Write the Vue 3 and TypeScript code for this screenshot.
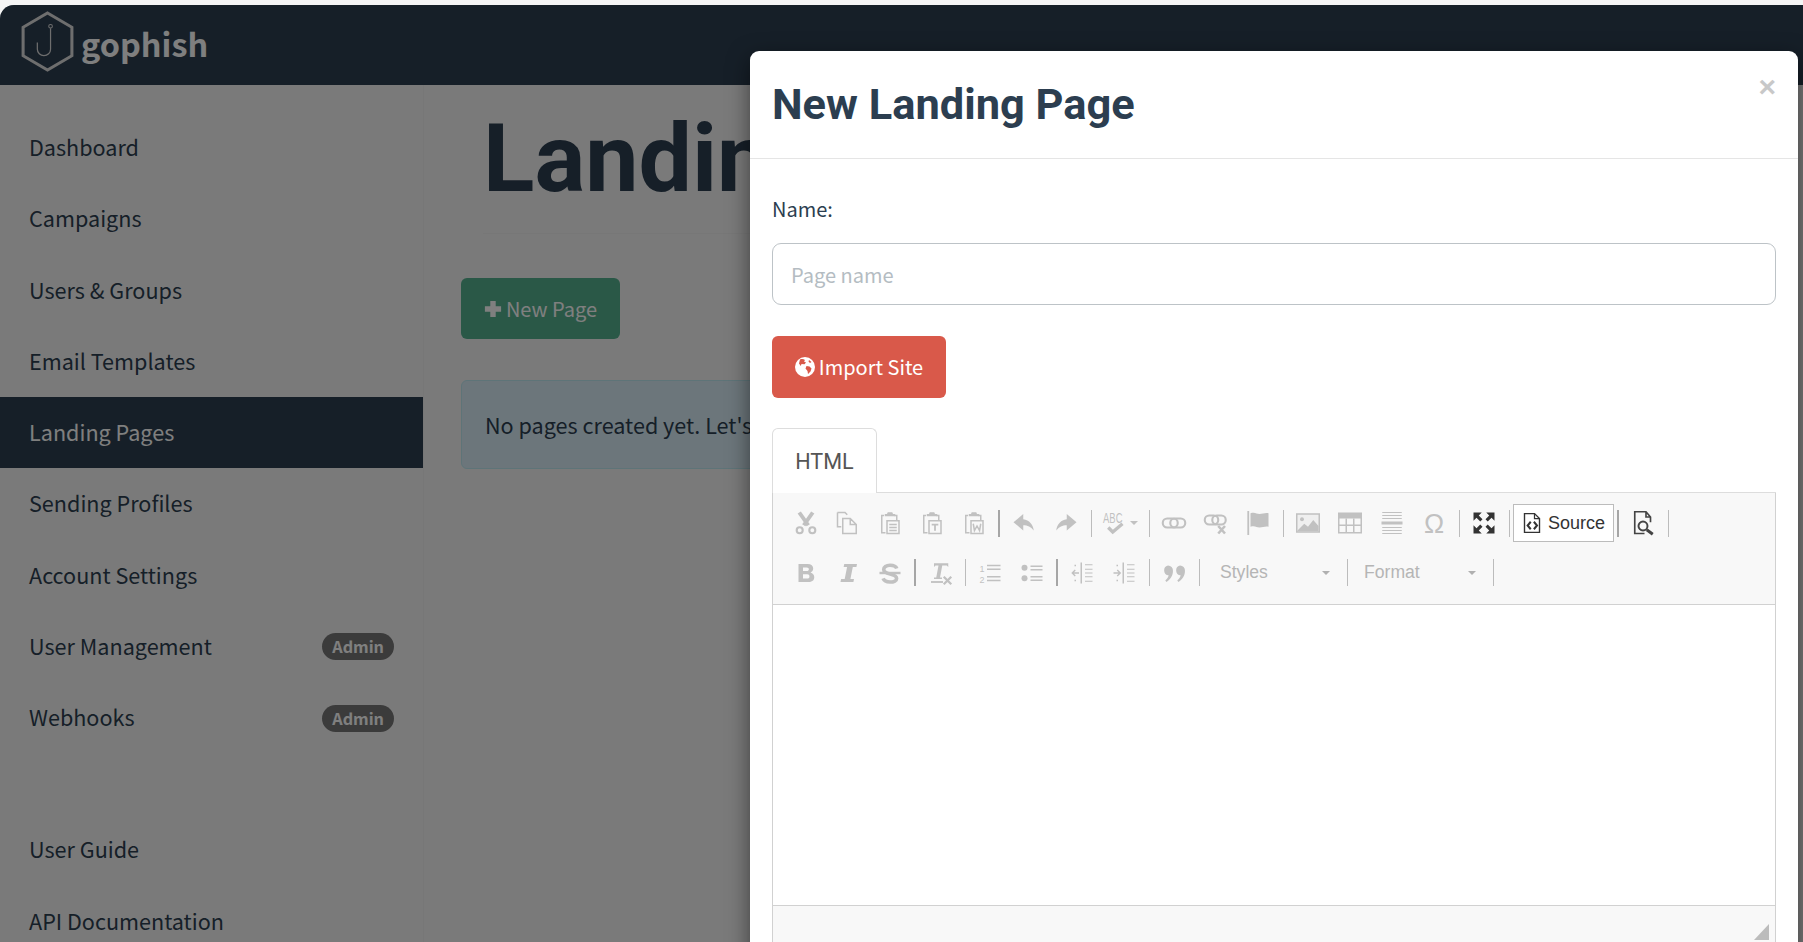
<template>
  <div class="page">
    <div class="navbar">
      <svg class="logo" viewBox="0 0 54 60" fill="none" stroke="#ddd">
        <path d="M27 2 L51 16 V44 L27 58 L3 44 V16 Z" stroke-width="3" />
        <path d="M30 17 V37.5 a6.5 6.5 0 0 1 -13 0 V31" stroke-width="1.2" />
        <circle cx="30" cy="15" r="1.8" stroke-width="1" />
      </svg>
      <span class="brand">gophish</span>
    </div>
    <div class="body">
      <aside class="sidebar">
        <div
          v-for="item in navItems"
          :key="item.label"
          class="nav-item"
          :class="{ active: item.active }"
        >
          <span>{{ item.label }}</span>
          <span v-if="item.admin" class="badge">Admin</span>
        </div>
        <div class="nav-gap"></div>
        <div v-for="item in helpItems" :key="item" class="nav-item">{{ item }}</div>
      </aside>
      <main class="main">
        <h1 class="page-title">Landing Pages</h1>
        <button class="new-btn">
          <svg class="plus" viewBox="0 0 20 20"><path d="M7 1h6v6h6v6h-6v6H7v-6H1V7h6z" fill="#fff" /></svg>New Page
        </button>
        <div class="alert">No pages created yet. Let's create one!</div>
      </main>
    </div>

    <div class="backdrop"></div>
    <div class="modal">
      <div class="modal-header">
        <h4>New Landing Page</h4>
        <span class="close">×</span>
      </div>
      <div class="modal-body">
        <label class="name-label">Name:</label>
        <input class="name-input" type="text" placeholder="Page name" />
        <button class="import-btn">
          <svg class="globe" viewBox="0 0 20 20">
            <circle cx="10" cy="10" r="10" fill="#fff" />
            <path d="M5 2.5c2-.8 3.5-.5 5 .5l-1 1.5 2 1-1.5 1.8-3-.3-.7 2-1.8-2.5z M11.5 9l3 .5 2 2-1 3-2.5 2.5-.5-3-2-2.5z M14 3l2.5 2-1.5 1-1.5-1.500z" fill="#d9594a" />
          </svg><span class="import-text">Import Site</span>
        </button>
        <div class="tabs"><div class="tab">HTML</div></div>
        <div class="editor">
          <div class="toolbar">
            <div class="tool-row">
              <template v-for="(t, i) in row1" :key="i">
                <span v-if="t === '|'" class="sep"></span>
                <span v-else-if="t === '||'" class="sep thick"></span>
                <span v-else class="tool" :class="{ on: t === 'max', wide: t === 'spell' }">
                  <svg viewBox="0 0 16 16" v-html="icons[t]"></svg>
                  <i v-if="t === 'spell'" class="caret"></i>
                </span>
              </template>
              <span class="source"><svg viewBox="0 0 16 16" v-html="icons.source"></svg>Source</span>
              <span class="sep thick"></span>
              <span class="tool on"><svg viewBox="0 0 16 16" v-html="icons.preview"></svg></span>
              <span class="sep"></span>
            </div>
            <div class="tool-row second">
              <template v-for="(t, i) in row2" :key="i">
                <span v-if="t === '|'" class="sep"></span>
                <span v-else-if="t === '||'" class="sep thick"></span>
                <span v-else class="tool"><svg viewBox="0 0 16 16" v-html="icons[t]"></svg></span>
              </template>
              <span class="combo">Styles<i class="caret"></i></span>
              <span class="sep"></span>
              <span class="combo format">Format<i class="caret"></i></span>
              <span class="sep"></span>
            </div>
          </div>
          <div class="content"></div>
          <div class="editor-foot"><i class="resizer"></i></div>
        </div>
      </div>
    </div>
  </div>
</template>

<script setup lang="ts">
const navItems = [
  { label: 'Dashboard' },
  { label: 'Campaigns' },
  { label: 'Users & Groups' },
  { label: 'Email Templates' },
  { label: 'Landing Pages', active: true },
  { label: 'Sending Profiles' },
  { label: 'Account Settings' },
  { label: 'User Management', admin: true },
  { label: 'Webhooks', admin: true },
];
const helpItems = ['User Guide', 'API Documentation'];

const row1 = [
  'cut', 'copy', 'paste', 'pastetext', 'pasteword', '||',
  'undo', 'redo', '|', 'spell', '|',
  'link', 'unlink', 'flag', '|',
  'image', 'table', 'hr', 'omega', '|', 'max', '|',
];
const row2 = [
  'bold', 'italic', 'strike', '||', 'clear', '|',
  'ol', 'ul', '||', 'outdent', 'indent', '|', 'quote', '|',
];

// ckeditor moono icons, redrawn on a 16 unit box
const clip = '<path d="M4 3H2.5v11.5H5M11 3h1.5v3" fill="none" stroke="#444"/><path d="M4.5 3.5V2H6l.5-1.2h3L10 2h1.5v1.500z" fill="#444"/>';
const icons: Record<string, string> = {
  cut: '<path d="M3.5 1l6 8.5M12.5 1l-6 8.5" stroke="#444" stroke-width="2.6" fill="none"/><circle cx="3.800" cy="12.800" r="2" fill="none" stroke="#444" stroke-width="1.4"/><circle cx="12.200" cy="12.800" r="2" fill="none" stroke="#444" stroke-width="1.4"/>',
  copy: '<path d="M1 1h5l1.500 1.500M1 1v9.500H3.500M4.500 5h5l4 4v6h-9zM9.500 5v4h4" fill="none" stroke="#444"/>',
  paste: clip + '<path d="M6 6.5h8V15H6zM7.5 9h5M7.5 11h5M7.5 13h5" fill="none" stroke="#444"/>',
  pastetext: clip + '<path d="M6 6.5h8V15H6z" fill="none" stroke="#444"/><path d="M7.800 8.500h4.400v1.100h-1.600v3.600H9.400V9.600H7.800z" fill="#444"/>',
  pasteword: clip + '<path d="M6 6.5h8V15H6zM7.5 8.5l.8 4.500L10 10l1.700 3 .8-4.500" fill="none" stroke="#444"/>',
  undo: '<path d="M7.500 2L1 7.500l6.500 5.500V9.500c3 0 5 1 7 3.500-.5-4-3-7-7-7.500z" fill="#444"/>',
  redo: '<path d="M8.500 2L15 7.500 8.500 13V9.500c-3 0-5 1-7 3.500.5-4 3-7 7-7.500z" fill="#444"/>',
  spell: '<text x="0" y="8" font-family="Liberation Sans" font-size="9.5" textLength="13" lengthAdjust="spacingAndGlyphs" fill="#444">ABC</text><path d="M3.500 11l3 3L13 8.500" fill="none" stroke="#444" stroke-width="2.200"/>',
  link: '<rect x="0.500" y="5" width="10" height="6" rx="3" fill="none" stroke="#444" stroke-width="1.400"/><rect x="5.500" y="5" width="10" height="6" rx="3" fill="none" stroke="#444" stroke-width="1.400"/>',
  unlink: '<rect x="0.500" y="3" width="9" height="6" rx="3" fill="none" stroke="#444" stroke-width="1.400"/><rect x="5.500" y="3" width="9" height="6" rx="3" fill="none" stroke="#444" stroke-width="1.400"/><path d="M9.500 10l4.500 5M14 10l-4.500 5" stroke="#444" stroke-width="1.700"/>',
  flag: '<path d="M1.500 0v16" stroke="#444" stroke-width="1.200"/><path d="M3 1.500c3-1 4 .5 6 .5s4-1 6-.5v9c-2-.5-4 .5-6 .5s-3-1.500-6-.5z" fill="#444"/>',
  image: '<rect x="0.500" y="2" width="15" height="12" fill="#ddd" stroke="#444"/><circle cx="4" cy="5.500" r="1.300" fill="#444"/><path d="M1 13l4.500-4.500 2.500 2 3.500-4.500L15 10v3.500H1z" fill="#444"/>',
  table: '<path d="M.5 1.500h15v13H.5z" fill="none" stroke="#444"/><path d="M.5 1.500h15V5H.5z" fill="#444"/><path d="M5.500 5v9.500M10.500 5v9.500M.5 9.500h15" stroke="#444"/>',
  hr: '<path d="M1.500 1h13M1.500 3h13M1.500 5h13M1.500 11h13M1.500 13h13M1.500 15h13" stroke="#444" stroke-width=".7"/><path d="M1 7h14v2H1z" fill="#444"/>',
  omega: '<text x="8" y="14.500" text-anchor="middle" font-family="Liberation Sans" font-size="18" fill="#444">Ω</text>',
  max: '<path d="M1 1h5.500L4.500 3 7 5.500 5.500 7 3 4.500 1 6.500zM15 1v5.500L13 4.500 10.500 7 9 5.500 11.500 3 9.500 1zM1 15V9.500L3 11.500 5.500 9 7 10.500 4.500 13 6.500 15zM15 15H9.500l2-2L9 10.500 10.500 9 13 11.500l2-2z" fill="#333"/>',
  source: '<path d="M2 .5h8l4 4v11H2z" fill="none" stroke="#333" stroke-width="1.100"/><path d="M10 .5v4h4" fill="none" stroke="#333"/><path d="M7 7L4.500 10 7 13M9.500 7L12 10 9.500 13" fill="none" stroke="#333" stroke-width="1.600"/>',
  preview: '<path d="M9 15H2.500V.5H10L13 4v3.500M10 .5V4h3" fill="none" stroke="#444" stroke-width="1.100"/><circle cx="8" cy="10" r="3" fill="none" stroke="#444" stroke-width="1.300"/><path d="M10.500 12.500L14.500 15.500" stroke="#444" stroke-width="2"/>',
  bold: '<path d="M3 2h6c2.500 0 3.800 1.200 3.800 3 0 1.300-.7 2.200-1.800 2.700 1.500.4 2.500 1.500 2.500 3.100 0 2.100-1.500 3.200-4 3.200H3zm3 2.300v2.400h2.500c.9 0 1.400-.5 1.400-1.200S9.400 4.300 8.500 4.300zm0 4.600v2.800h2.800c1 0 1.500-.5 1.500-1.400s-.5-1.400-1.500-1.400z" fill="#444" fill-rule="evenodd"/>',
  italic: '<path d="M5.500 2H14l-.4 2h-2.400l-1.600 8h2.400l-.4 2H3l.4-2h2.400l1.600-8H5.100z" fill="#444"/>',
  strike: '<path d="M12.500 5C12 3.500 10.500 2.800 8 2.800S3.800 4 3.800 5.600c0 3.800 8.600 2.400 8.600 6 0 1.500-1.700 2.400-4.400 2.400-2.500 0-4-.8-4.600-2.400" fill="none" stroke="#444" stroke-width="2.400"/><path d="M1 8h14" stroke="#444" stroke-width="1.600"/>',
  clear: '<path d="M4 1.500h9.500v2.500l-1-1H9.500L8 11h1.300v1H4v-1h1.500L7 3H5L4 4z" fill="#444"/><path d="M2 14h8" stroke="#444" stroke-width="1.200"/><path d="M10.500 10.500l5 5M15.500 10.500l-5 5" stroke="#444" stroke-width="1.500"/>',
  ol: '<text x="1" y="7" font-family="Liberation Sans" font-size="6" fill="#444">1</text><text x="1" y="14.500" font-family="Liberation Sans" font-size="6" fill="#444">2</text><path d="M6 3h9M6 5.500h9M6 10.500h9M6 13h9" stroke="#444"/>',
  ul: '<circle cx="3" cy="4.500" r="2" fill="#444"/><circle cx="3" cy="11.500" r="2" fill="#444"/><path d="M7 3.500h8M7 5.800h8M7 10.500h8M7 12.800h8" stroke="#444"/>',
  outdent: '<path d="M7.500 1v14" stroke="#444"/><path d="M10 2.500h5M10 5.500h5M10 8h5M10 10.500h5M10 13.500h5" stroke="#444" stroke-width=".8"/><path d="M6 8H1.500M3.500 6L1.500 8l2 2" fill="none" stroke="#444" stroke-width=".9"/><path d="M3 3h2M3 13h2" stroke="#444" stroke-dasharray="1 1"/>',
  indent: '<path d="M7.500 1v14" stroke="#444"/><path d="M10 2.500h5M10 5.500h5M10 8h5M10 10.500h5M10 13.500h5" stroke="#444" stroke-width=".8"/><path d="M1 8h4.500M3.500 6l2 2-2 2" fill="none" stroke="#444" stroke-width=".9"/><path d="M3 3h2M3 13h2" stroke="#444" stroke-dasharray="1 1"/>',
  quote: '<path d="M4 3a3.300 3.300 0 0 1 3.300 3.500c0 3.500-2 6-4.300 7.500l-.8-1c1.200-1 2-2.200 2.200-3.500A3.300 3.300 0 0 1 4 3zM12 3a3.300 3.300 0 0 1 3.300 3.500c0 3.500-2 6-4.300 7.500l-.8-1c1.200-1 2-2.200 2.200-3.500A3.300 3.300 0 0 1 12 3z" fill="#444"/>',
};
</script>

<style>
html,
body {
  margin: 0;
  padding: 0;
  overflow: hidden;
  background: #f5f5f5;
}
</style>

<style scoped>
.page {
  position: relative;
  width: 1803px;
  height: 942px;
  padding-top: 5px;
  box-sizing: border-box;
  overflow: hidden;
  font-family: "Noto Sans CJK SC", "Noto Sans", sans-serif;
  font-size: 21.6px;
  color: #2c3e50;
  background: #f5f5f5;
}

.navbar {
  display: flex;
  align-items: center;
  height: 80px;
  padding-left: 20px;
  box-sizing: border-box;
  background: #2c3e50;
  border-top-left-radius: 14px;
}

.logo {
  width: 55px;
  height: 61px;
  margin: 0 6px 8px 0;
}

.brand {
  margin-bottom: 6px;
  font-size: 32.4px;
  font-weight: 700;
  color: #fff;
}

.body {
  display: flex;
  height: 857px;
}

.sidebar {
  flex: 0 0 424px;
  padding-top: 27px;
  box-sizing: border-box;
  background: #f5f5f5;
  border-right: 1px solid #eee;
}

.nav-item {
  display: flex;
  align-items: center;
  justify-content: space-between;
  height: 71.25px;
  padding: 0 29px 2px 29px;
  box-sizing: border-box;
  color: #2c3e50;
}

.nav-item.active {
  background: #2c3e50;
  color: #fff;
}

.nav-gap {
  height: 61px;
}

.badge {
  margin-top: 3px;
  padding: 0 10px;
  height: 27px;
  line-height: 26px;
  border-radius: 14px;
  background: #777;
  color: #fff;
  font-size: 16.2px;
  font-weight: 700;
}

.main {
  flex: 1;
  padding-left: 37px;
}

.page-title {
  margin: 23px 0 44px 22px;
  padding-bottom: 23px;
  width: 1260px;
  border-bottom: 1px solid #eee;
  font-family: Roboto, sans-serif;
  font-size: 95px;
  font-weight: 700;
  line-height: 102px;
  white-space: nowrap;
  color: #2c3e50;
}

.new-btn {
  display: block;
  height: 61px;
  width: 159px;
  padding: 0;
  border: none;
  border-radius: 6px;
  background: #55b08f;
  color: #fff;
  font: inherit;
  font-size: 20px;
}

.plus {
  width: 18px;
  height: 18px;
  margin-right: 4px;
  vertical-align: -1px;
}

.alert {
  width: 1250px;
  height: 89px;
  margin-top: 41px;
  padding: 0 23px;
  line-height: 87px;
  box-sizing: border-box;
  background: #d9edf7;
  border: 1px solid #bce8f1;
  border-radius: 6px;
}

.backdrop {
  position: absolute;
  inset: 5px 0 0 0;
  background: rgba(0, 0, 0, 0.5);
  border-top-left-radius: 14px;
}

.modal {
  position: absolute;
  left: 750px;
  top: 51px;
  width: 1048px;
  height: 1100px;
  background: #fff;
  border-radius: 9px;
  box-shadow: 0 7px 22px rgba(0, 0, 0, 0.5);
}

.modal-header {
  position: relative;
  height: 108px;
  padding: 0 22px;
  box-sizing: border-box;
  border-bottom: 1px solid #e5e5e5;
}

.modal-header h4 {
  margin: 0;
  font-family: Roboto, sans-serif;
  font-size: 43.4px;
  font-weight: 700;
  line-height: 108px;
  color: #2c3e50;
}

.close {
  position: absolute;
  right: 22px;
  top: 15px;
  font-family: "Liberation Sans", sans-serif;
  font-size: 30px;
  font-weight: 700;
  line-height: 42px;
  color: #c8c8c8;
}

.modal-body {
  display: flex;
  flex-direction: column;
  align-items: flex-start;
  padding: 0 22px;
}

.name-label {
  margin-top: 33px;
  line-height: 34px;
  font-size: 20px;
}

.name-input {
  width: 100%;
  height: 62px;
  margin-top: 17px;
  padding: 0 18px;
  box-sizing: border-box;
  border: 1px solid #bdc3c7;
  border-radius: 9px;
  font: inherit;
  font-size: 20px;
  color: #2c3e50;
}

.name-input::placeholder {
  color: #b4bcc2;
}

.import-btn {
  display: flex;
  align-items: center;
  justify-content: center;
  width: 174px;
  height: 62px;
  margin-top: 31px;
  padding: 0;
  border: none;
  border-radius: 6px;
  background: #d9594a;
  color: #fff;
  font: inherit;
  font-size: 20px;
}

.import-text {
  margin-bottom: 2px;
}

.globe {
  width: 20px;
  height: 20px;
  margin-right: 4px;
}

.tabs {
  width: 100%;
  margin-top: 30px;
  height: 65px;
  border-bottom: 1px solid #ddd;
  box-sizing: border-box;
}

.tab {
  width: 105px;
  height: 65px;
  box-sizing: border-box;
  border: 1px solid #ddd;
  border-bottom: none;
  border-radius: 6px 6px 0 0;
  background: #fff;
  text-align: center;
  font-family: Roboto, sans-serif;
  font-size: 21.6px;
  line-height: 65px;
  color: #555;
}

.editor {
  width: 100%;
  box-sizing: border-box;
  border: 1px solid #d1d1d1;
  border-top: none;
}

.toolbar {
  height: 112px;
  box-sizing: border-box;
  padding-left: 12px;
  background: #f8f8f8;
  border-bottom: 1px solid #d1d1d1;
}

.tool-row {
  display: flex;
  align-items: center;
  height: 60px;
}

.tool-row.second {
  height: 39px;
}

.tool {
  display: flex;
  flex: none;
  align-items: center;
  justify-content: center;
  width: 42px;
  height: 24px;
  opacity: 0.3;
}

.tool.wide {
  width: 50px;
}

.tool.on {
  opacity: 1;
}

.tool svg {
  width: 24px;
  height: 24px;
  flex: none;
  overflow: visible;
}

.caret {
  display: inline-block;
  width: 0;
  height: 0;
  border: 4px solid transparent;
  border-top-color: #444;
  border-bottom: none;
}

.tool .caret {
  margin-left: 3px;
}

.sep {
  flex: none;
  width: 1px;
  height: 27px;
  margin: 0 3.5px;
  background: #bcbcbc;
}

.sep.thick {
  width: 2px;
  margin: 0 3px;
  background: #a6a6a6;
}

.source {
  display: flex;
  flex: none;
  align-items: center;
  height: 38px;
  width: 101px;
  box-sizing: border-box;
  padding-left: 8px;
  background: #fff;
  border: 1px solid #bcbcbc;
  font-family: "Liberation Sans", sans-serif;
  font-size: 18px;
  color: #333;
}

.source svg {
  width: 20px;
  height: 24px;
  margin-right: 6px;
}

.combo {
  display: flex;
  flex: none;
  align-items: center;
  justify-content: space-between;
  box-sizing: border-box;
  padding: 0 13px 0 17px;
  width: 140px;
  font-family: "Liberation Sans", sans-serif;
  font-size: 17.6px;
  color: #b5b5b5;
}

.combo.format {
  padding-left: 13px;
  width: 138px;
}

.combo .caret {
  opacity: 0.4;
}

.content {
  height: 300px;
  background: #fff;
}

.editor-foot {
  position: relative;
  height: 60px;
  border-top: 1px solid #d1d1d1;
  background: #f8f8f8;
}

.resizer {
  position: absolute;
  right: 6px;
  top: 18px;
  width: 15px;
  height: 16px;
  background: #bcbcbc;
  clip-path: polygon(100% 0, 100% 100%, 0 100%);
}
</style>
